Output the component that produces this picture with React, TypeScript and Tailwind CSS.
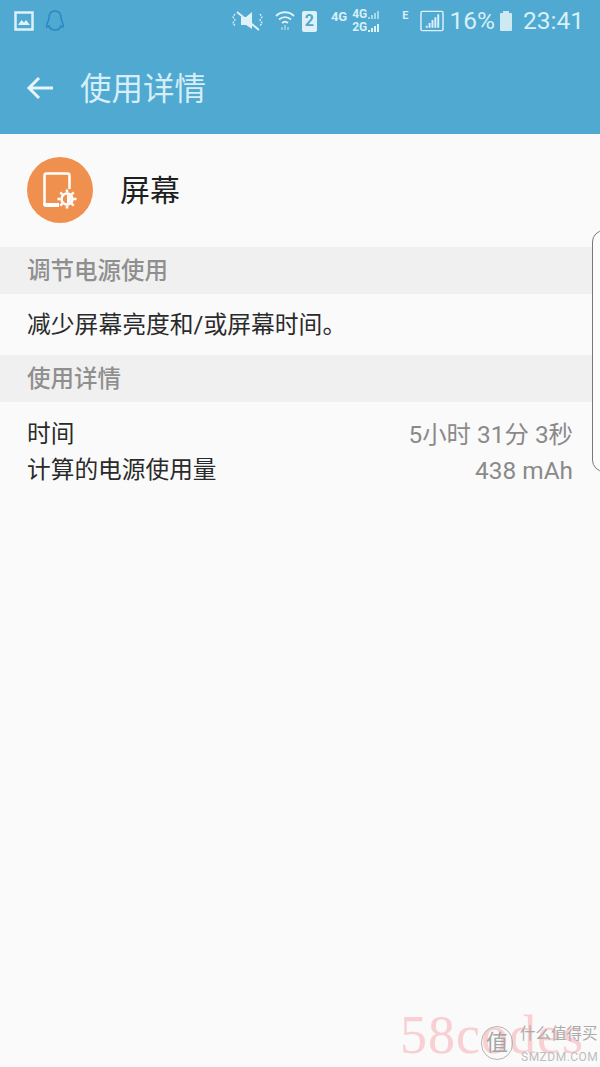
const font = { fontFamily: '"Roboto","Noto Sans CJK SC",sans-serif' };

function StatusBar() {
  return (
    <div className="flex h-[42px] items-center pl-[14px] pr-[16px] text-[#d8f0f8]">
      <svg width="20" height="20" viewBox="0 0 20 20" className="mr-[10px]">
        <rect x="1.500" y="1.500" width="17" height="17" fill="none" stroke="#dff1f8" strokeWidth="2.500" />
        <path d="M4 14l3.500-5 2.500 2.500 2-2.500 4 5z" fill="#dff1f8" />
      </svg>
      <svg width="22" height="24" viewBox="0 0 22 24">
        <path d="M11 2c-4 0-6 3-6 7 0 2-1 3-2 6-1 3 0 4 2 2 1 3 3 4 6 4s5-1 6-4c2 2 3 1 2-2-1-3-2-4-2-6 0-4-2-7-6-7z" fill="none" stroke="#2b87c4" strokeWidth="1.500" />
      </svg>
      <div className="flex-1" />
      <svg width="31" height="24" viewBox="0 0 31 24" className="mr-[12px]">
        <path d="M9 8h5l6-5v17l-6-4H9z" fill="#dff1f8" />
        <path d="M5 3l22 18" stroke="#dff1f8" strokeWidth="2" />
        <path d="M3 5l-2 3 2 3-2 3 2 3 M28 5l2 3-2 3 2 3-2 3" fill="none" stroke="#dff1f8" strokeWidth="1.300" strokeDasharray="2 1" />
      </svg>
      <svg width="20" height="22" viewBox="0 0 20 22" className="mr-[7px]">
        <path d="M1 6c5-5 13-5 18 0M4 9.500c3.500-3.300 8.500-3.300 12 0M7 13c2-1.700 4-1.700 6 0" fill="none" stroke="#dff1f8" strokeWidth="1.800" />
        <path d="M10 15v5M7 17v3M13 17v3" stroke="#bfe0ee" strokeWidth="1.200" />
      </svg>
      <div className="mr-[14px] flex h-[21px] w-[15px] items-center justify-center rounded-[2px] bg-[#dff1f8] text-[16px] font-bold leading-none text-[#4fa9d1]">2</div>
      <span className="mr-[5px] -mt-[10px] text-[13px] font-bold leading-none">4G</span>
      <div className="mr-[23px] flex flex-col items-start text-[12px] font-bold leading-[13px]">
        <span className="flex items-end gap-[1px]">4G<SmallBars dim /></span>
        <span className="flex items-end gap-[1px]">2G<SmallBars /></span>
      </div>
      <span className="mr-[11px] -mt-[12px] text-[11px] font-bold leading-none">E</span>
      <svg width="24" height="24" viewBox="0 0 25 24" className="mr-[6px]">
        <rect x="1" y="2" width="23" height="20" rx="1.500" fill="none" stroke="#dff1f8" strokeWidth="1.500" />
        <path d="M6 19h2v-2H6zM9 19h2v-5H9zM12 19h2v-8h-2zM15 19h2V8h-2zM18 19h2V5h-2z" fill="#dff1f8" />
      </svg>
      <span className="mr-[4px] text-[24.500px] leading-none">16%</span>
      <svg width="14" height="22" viewBox="0 0 14 22" className="mr-[10px]">
        <rect x="4" y="1" width="6" height="2" fill="#cfe9f3" />
        <rect x="1" y="3" width="12" height="18" rx="1" fill="#cfe9f3" />
      </svg>
      <span className="text-[24.500px] leading-none">23:41</span>
    </div>
  );
}

function SmallBars({ dim }: { dim?: boolean }) {
  const c = dim ? "bg-[#a9d6e9]" : "bg-[#dff1f8]";
  return (
    <span className="mb-[2px] flex items-end gap-[1px]">
      <span className={`h-[2px] w-[2px] ${c}`} />
      <span className={`h-[4px] w-[2px] ${c}`} />
      <span className={`h-[6px] w-[2px] ${c}`} />
      <span className={`h-[8px] w-[2px] ${c}`} />
    </span>
  );
}

function Band({ children }: { children: string }) {
  return (
    <div className="flex h-[47px] items-center bg-[#f0f0f0] pl-[27px] pt-[3px] text-[23.500px] font-medium text-[#8f8f8f]">
      {children}
    </div>
  );
}

function Row({ label, value }: { label: string; value: string }) {
  return (
    <div className="flex h-[36px] items-center justify-between pl-[27px] pr-[27px] pt-[2px]">
      <span className="text-[23.700px] text-[#2a2a2a]">{label}</span>
      <span className="text-[24.400px] text-[#8a8a8a]">{value}</span>
    </div>
  );
}

export default function App() {
  return (
    <div className="relative h-[1067px] w-[600px] overflow-hidden bg-[#fafafa]" style={font}>
      <div className="h-[134px] bg-[#4fa9d1]">
        <StatusBar />
        <div className="flex h-[92px] items-center pl-[26px]">
          <svg width="28" height="28" viewBox="0 0 28 28" className="mr-[26px]">
            <path d="M27 14H3M13 4L3 14l10 10" fill="none" stroke="#e6f5fa" strokeWidth="3" />
          </svg>
          <span className="pt-[3px] text-[31.500px] leading-none text-[#d5eef7]">使用详情</span>
        </div>
      </div>

      <div className="flex h-[113px] items-center pb-[1px] pl-[27px]">
        <div className="mr-[27px] flex h-[66px] w-[66px] items-center justify-center rounded-full bg-[#f0904f]">
          <svg width="40" height="46" viewBox="0 0 40 46">
            <path d="M4.500 37V8.500A2 2 0 0 1 6.500 6.500h21A2 2 0 0 1 29.500 8.500V22" fill="none" stroke="#fff" strokeWidth="2.500" />
            <path d="M3 36h16v4H6a3 3 0 0 1-3-3z" fill="#fff" />
            <circle cx="27" cy="32" r="5.500" fill="none" stroke="#fff" strokeWidth="2.500" />
            <path d="M27 28a4 4 0 0 1 0 8z" fill="#fff" />
            <path d="M27 22.500v3M27 38.500v3M17.500 32h3M33.500 32h3M20.300 25.300l2 2M31.700 36.700l2 2M33.700 25.300l-2 2M22.300 36.700l-2 2" stroke="#fff" strokeWidth="2.500" />
          </svg>
        </div>
        <span className="text-[30px] text-[#1f1f1f]">屏幕</span>
      </div>

      <Band>调节电源使用</Band>
      <div className="flex h-[61px] items-center pl-[27px] pt-[3px] text-[23.800px] text-[#2a2a2a]">减少屏幕亮度和/或屏幕时间。</div>
      <Band>使用详情</Band>
      <div className="flex flex-col pt-[14px]">
        <Row label="时间" value="5小时 31分 3秒" />
        <Row label="计算的电源使用量" value="438 mAh" />
      </div>

      <div className="absolute left-[592px] top-[230px] h-[242px] w-[20px] rounded-l-[12px] border border-[#777] bg-[#fcfcfc]" />

      <div className="absolute left-[400px] top-[1008px] whitespace-nowrap text-[54px] leading-none tracking-[1px] text-[#f8cfd2]" style={{ fontFamily: '"Liberation Serif",serif' }}>
        58codes
      </div>
      <div className="absolute left-[481px] top-[1026px] flex h-[34px] w-[32px] items-center justify-center rounded-full border border-[#b5b5b5] text-[22px] leading-none text-[#a5a5a5]">值</div>
      <div className="absolute left-[520px] top-[1027px] whitespace-nowrap text-[15.500px] leading-none text-[#ababab]">什么值得买</div>
      <div className="absolute left-[521px] top-[1051px] whitespace-nowrap text-[12px] leading-none tracking-[0.500px] text-[#bdbdbd]">SMZDM.COM</div>
    </div>
  );
}
